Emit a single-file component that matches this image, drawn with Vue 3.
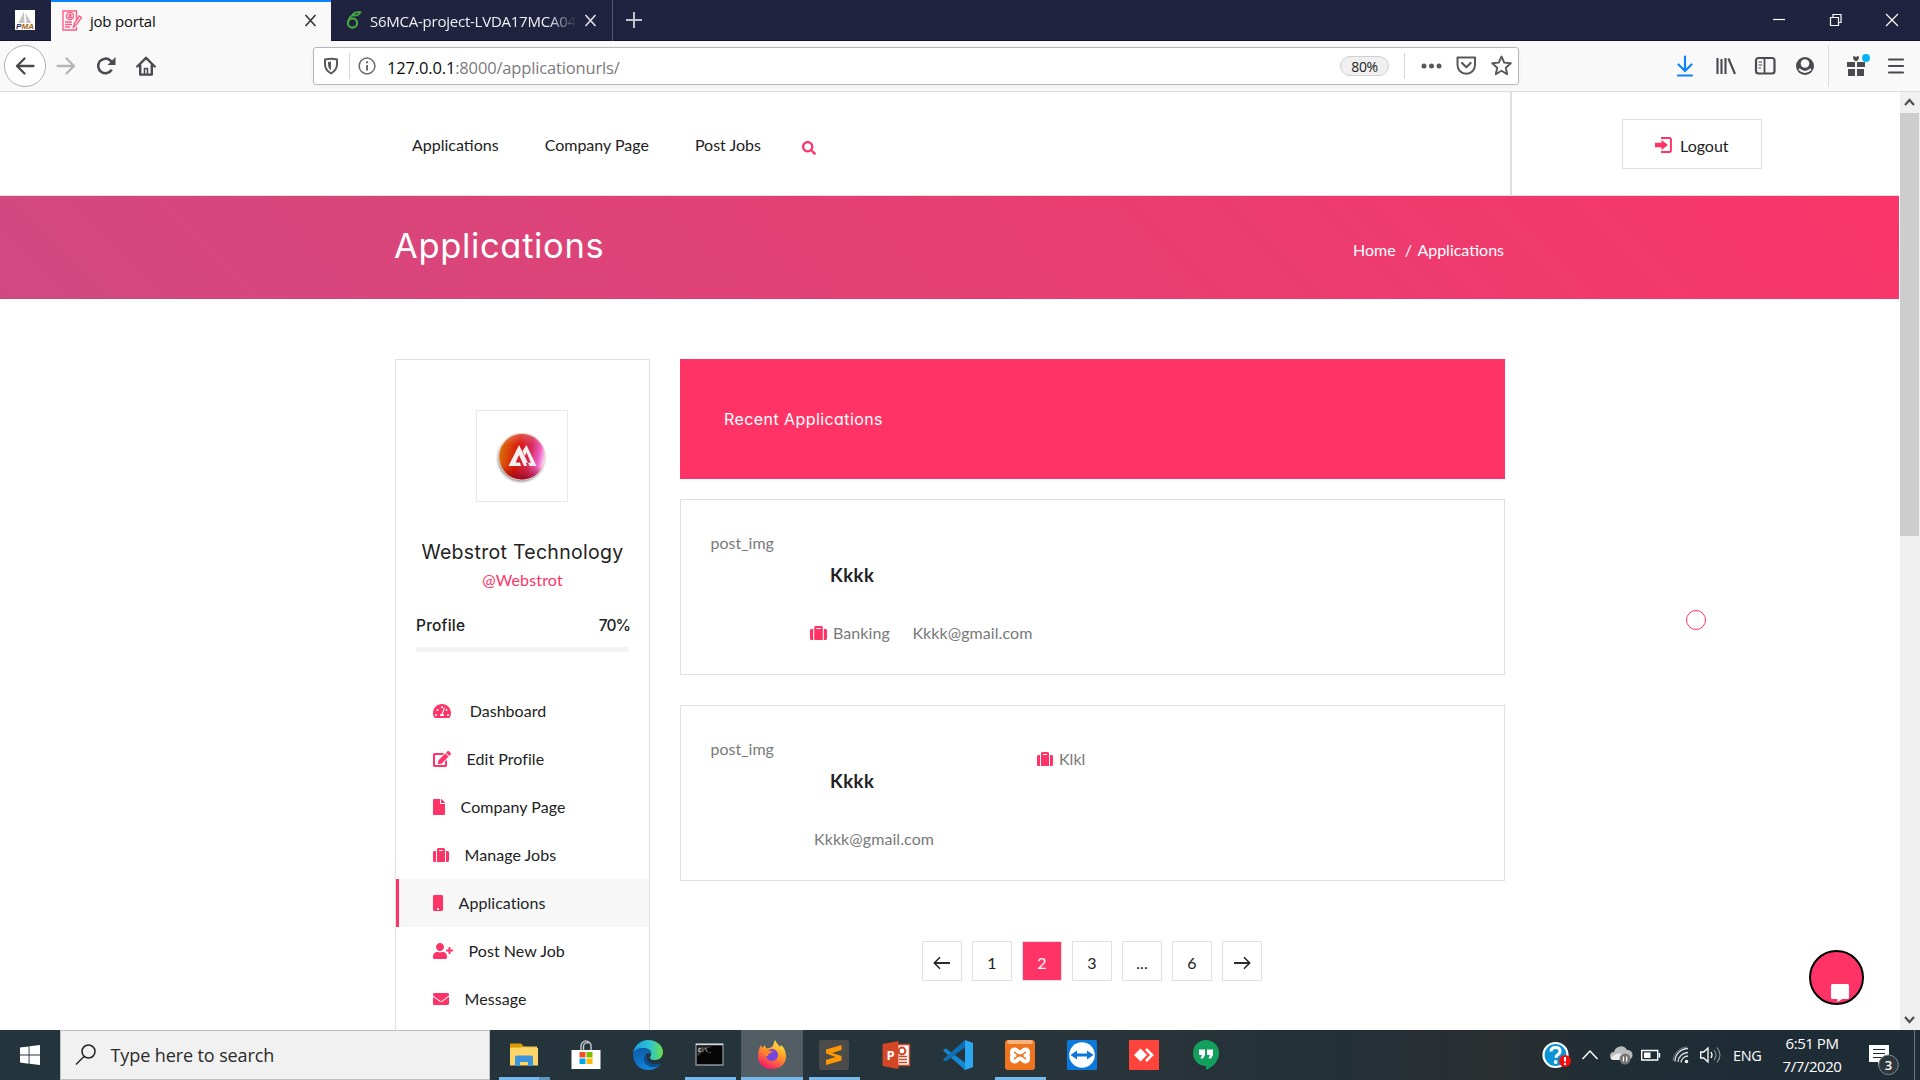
<script setup>
const icons = {
  suitcase: { w: 512, d: 'M128 480h256V80c0-26.5-21.5-48-48-48H176c-26.5 0-48 21.5-48 48v400zm64-384h128v32H192V96zm320 80v256c0 26.5-21.5 48-48 48h-48V128h48c26.5 0 48 21.5 48 48zM96 480H48c-26.5 0-48-21.5-48-48V176c0-26.5 21.5-48 48-48h48v352z' },
  gauge: { w: 576, d: 'M288 32C128.94 32 0 160.94 0 320c0 52.8 14.25 102.26 39.06 144.8 5.61 9.62 16.3 15.2 27.44 15.2h443c11.14 0 21.83-5.58 27.44-15.2C561.75 422.26 576 372.8 576 320c0-159.06-128.94-288-288-288zM96 352a32 32 0 1 1 0 64 32 32 0 0 1 0-64zM144 192a32 32 0 1 1 0 64 32 32 0 0 1 0-64zM288 96a32 32 0 0 1 26 50l-9 24a32 32 0 1 1-17-74zM480 352a32 32 0 1 1 0 64 32 32 0 0 1 0-64zM432 192a32 32 0 1 1 0 64 32 32 0 0 1 0-64zM359 137c13 4 20 17 16 30l-57 173c20 10 34 32 34 56 0 8-3 14-5 20H229c-3-6-5-13-5-20 0-34 27-62 61-64l57-173c4-13 10-24 17-22z' },
  edit: { w: 576, d: 'M402.6 83.2l90.2 90.2c3.8 3.8 3.8 10 0 13.8L274.4 405.6l-92.8 10.3c-12.4 1.4-22.9-9.1-21.5-21.5l10.3-92.8L388.8 83.2c3.8-3.8 10-3.8 13.8 0zm162-22.9l-48.8-48.8c-15.2-15.2-39.9-15.2-55.2 0l-35.4 35.4c-3.8 3.8-3.8 10 0 13.8l90.2 90.2c3.8 3.8 10 3.8 13.8 0l35.4-35.4c15.2-15.3 15.2-40 0-55.2zM384 346.2V448H64V128h229.8c3.2 0 6.2-1.3 8.5-3.5l40-40c7.6-7.6 2.2-20.5-8.5-20.5H48C21.5 64 0 85.5 0 112v352c0 26.5 21.5 48 48 48h352c26.5 0 48-21.5 48-48V306.2c0-10.7-12.9-16-20.5-8.5l-40 40c-2.2 2.3-3.5 5.3-3.5 8.5z' },
  file: { w: 384, d: 'M224 136V0H24C10.7 0 0 10.7 0 24v464c0 13.3 10.7 24 24 24h336c13.3 0 24-10.7 24-24V160H248c-13.2 0-24-10.8-24-24zm160-14.1v6.1H256V0h6.1c6.4 0 12.5 2.5 17 7l97.9 98c4.5 4.5 7 10.6 7 16.9z' },
  mobile: { w: 320, d: 'M272 0H48C21.5 0 0 21.5 0 48v416c0 26.5 21.5 48 48 48h224c26.5 0 48-21.5 48-48V48c0-26.5-21.5-48-48-48zM160 480c-17.7 0-32-14.3-32-32s14.3-32 32-32 32 14.3 32 32-14.3 32-32 32z' },
  userPlus: { w: 640, d: 'M624 208h-64v-64c0-8.8-7.2-16-16-16h-32c-8.8 0-16 7.2-16 16v64h-64c-8.8 0-16 7.2-16 16v32c0 8.8 7.2 16 16 16h64v64c0 8.8 7.2 16 16 16h32c8.8 0 16-7.2 16-16v-64h64c8.8 0 16-7.2 16-16v-32c0-8.8-7.2-16-16-16zm-400 48c70.7 0 128-57.3 128-128S294.7 0 224 0 96 57.3 96 128s57.3 128 128 128zm89.6 32h-16.7c-22.2 10.2-46.9 16-72.9 16s-50.6-5.8-72.9-16h-16.7C60.2 288 0 348.2 0 422.4V464c0 26.5 21.5 48 48 48h352c26.5 0 48-21.5 48-48v-41.6c0-74.2-60.2-134.4-134.4-134.4z' },
  envelope: { w: 512, d: 'M502.3 190.8c3.9-3.1 9.7-.2 9.7 4.7V400c0 26.5-21.5 48-48 48H48c-26.5 0-48-21.5-48-48V195.6c0-5 5.7-7.8 9.7-4.7 22.4 17.4 52.1 39.5 154.1 113.6 21.1 15.4 56.7 47.8 92.2 47.6 35.7.3 72-32.8 92.3-47.6 102-74.1 131.6-96.3 154-113.7zM256 320c23.2.4 56.6-29.2 73.4-41.4 132.7-96.3 142.8-104.7 173.4-128.7 5.8-4.5 9.2-11.5 9.2-18.9v-19c0-26.5-21.5-48-48-48H48c-26.5 0-48 21.5-48 48v19c0 7.4 3.4 14.3 9.2 18.9 30.6 23.9 40.7 32.4 173.4 128.7 16.8 12.2 50.2 41.8 73.4 41.4z' },
  search: { w: 512, d: 'M505 442.7L405.3 343c-4.5-4.5-10.6-7-17-7H372c27.6-35.3 44-79.7 44-128C416 93.1 322.9 0 208 0S0 93.1 0 208s93.1 208 208 208c48.3 0 92.7-16.4 128-44v16.3c0 6.4 2.5 12.5 7 17l99.7 99.7c9.4 9.4 24.6 9.4 33.9 0l28.3-28.3c9.4-9.4 9.4-24.6.1-34zM208 336c-70.7 0-128-57.2-128-128 0-70.7 57.2-128 128-128 70.7 0 128 57.2 128 128 0 70.7-57.2 128-128 128z' },
}

const menu = [
  { icon: 'gauge', label: 'Dashboard', wide: true },
  { icon: 'edit', label: 'Edit Profile' },
  { icon: 'file', label: 'Company Page' },
  { icon: 'suitcase', label: 'Manage Jobs' },
  { icon: 'mobile', label: 'Applications', active: true },
  { icon: 'userPlus', label: 'Post New Job' },
  { icon: 'envelope', label: 'Message' },
]

const pages = ['prev', '1', '2', '3', '...', '6', 'next']
</script>

<template>
  <div class="screen">
    <!-- Tab strip -->
    <div class="tabs">
      <div class="pinned">
        <svg width="20" height="20" viewBox="0 0 20 20">
          <rect width="20" height="20" fill="#fff" />
          <path d="M9 1.500 3.500 13h6zM10.500 3l1 10h5z" fill="#c4c4c4" />
          <text x="1" y="19" font-family="Liberation Sans, sans-serif" font-weight="700" font-style="italic" font-size="8" textLength="18" fill="#2b2b66">P<tspan fill="#a8630c">MA</tspan></text>
        </svg>
      </div>
      <div class="tab active">
        <svg class="fav" width="20" height="21" viewBox="0 0 20 21" fill="none" stroke="#ff5c85" stroke-width="1.400">
          <path d="M14.500 10V1H1v19h13.500v-3" />
          <circle cx="8" cy="6" r="3.600" />
          <circle cx="8" cy="5.200" r="1" />
          <path d="M6 8.200q2-2 4 0M3 12h7M3 14.500h7M3 17h5M11.500 17l1-4 5-7 2 1.500-5 7z" />
        </svg>
        <span class="tab-title">job portal</span>
        <svg class="x" width="13" height="13" viewBox="0 0 13 13"><path d="M1.500 1l10 11M11.500 1l-10 11" stroke="#38383d" stroke-width="1.700" /></svg>
      </div>
      <div class="tab second">
        <svg class="leaf" width="16" height="18" viewBox="0 0 16 18" fill="none" stroke="#46a83f" stroke-width="2.200"><circle cx="6.500" cy="12" r="4.600" /><path d="M2.500 10C3 6 6 4 9 3.600M6 5C7 1.500 10 .8 14.500 1.200 13 4 10 5 7 4.600" stroke-width="1.700" /></svg>
        <span class="tab-title fade">S6MCA-project-LVDA17MCA04</span>
        <svg class="x" width="13" height="13" viewBox="0 0 13 13"><path d="M1.500 1l10 11M11.500 1l-10 11" stroke="#dcdce2" stroke-width="1.700" /></svg>
      </div>
      <svg class="plus" width="18" height="18" viewBox="0 0 18 18"><path d="M9 1v16M1 9h16" stroke="#c3c3cc" stroke-width="2" /></svg>
      <svg class="winctl" width="130" height="20" viewBox="0 0 130 20" fill="none" stroke="#fff" stroke-width="1.200">
        <path d="M3 9.500h12" />
        <path d="M60.500 7.500h8v8h-8zM63 7.500v-3h8v8h-2.500" />
        <path d="M116 4l12 12M128 4l-12 12" />
      </svg>
    </div>

    <!-- Navigation toolbar -->
    <div class="toolbar">
      <div class="back">
        <svg width="20" height="18" viewBox="0 0 20 18" fill="none" stroke="#4a4a4f" stroke-width="2.300" stroke-linecap="round" stroke-linejoin="round"><path d="M9.500 1.500L2 9l7.500 7.500M2 9h16.500" /></svg>
      </div>
      <svg class="fwd" width="20" height="18" viewBox="0 0 20 18" fill="none" stroke="#b6b6b8" stroke-width="2.300" stroke-linecap="round" stroke-linejoin="round"><path d="M10.500 1.500L18 9l-7.500 7.500M18 9H1.500" /></svg>
      <svg class="reload" width="20" height="20" viewBox="0 0 20 20"><path d="M15.800 13.600A7.300 7.300 0 1 1 14.500 4.600L17 7" fill="none" stroke="#4a4a4f" stroke-width="2.500" /><path d="M19.500 1v8h-8z" fill="#4a4a4f" /></svg>
      <svg class="home" width="20" height="20" viewBox="0 0 20 20" fill="none" stroke="#4a4a4f" stroke-width="2.400" stroke-linejoin="round" stroke-linecap="round"><path d="M1.300 10.500L10 1.800l8.700 8.700M4.200 9v9.600h11.600V9" /><path d="M8.500 18v-5.500h3V18" stroke-width="1.600" /></svg>
      <div class="url">
        <svg class="shield" width="16" height="18" viewBox="0 0 16 18"><path d="M2 2.500Q8 .8 14 2.500V7q0 6-6 9.500Q2 13 2 7z" fill="none" stroke="#58585c" stroke-width="2" stroke-linejoin="round" /><path d="M8 4.500v9Q5 11 5 7V5z" fill="#58585c" /></svg>
        <i class="vline"></i>
        <svg class="info" width="18" height="18" viewBox="0 0 18 18"><circle cx="9" cy="9" r="7.900" fill="none" stroke="#6d6d70" stroke-width="1.500" /><path d="M9 8v5.500M9 4.300v2" stroke="#6d6d70" stroke-width="2" /></svg>
        <span class="address">127.0.0.1<em>:8000/applicationurls/</em></span>
        <span class="zoom">80%</span>
        <i class="vline z"></i>
        <svg class="acts" width="94" height="24" viewBox="0 0 94 24">
          <g fill="#58585c"><circle cx="5" cy="12" r="2.500" /><circle cx="12.500" cy="12" r="2.500" /><circle cx="20" cy="12" r="2.500" /></g>
          <path d="M38.500 3.500h17.500v7.500a8.750 8.750 0 0 1-17.500 0z" fill="none" stroke="#58585c" stroke-width="2" stroke-linejoin="round" />
          <path d="M43 9l4.300 4.200L51.600 9" fill="none" stroke="#58585c" stroke-width="2.200" stroke-linecap="round" stroke-linejoin="round" />
          <path d="M82.500 2.500l2.700 6.100 6.600.7-5 4.400 1.400 6.500-5.700-3.400-5.700 3.400 1.400-6.500-5-4.400 6.600-.7z" fill="none" stroke="#58585c" stroke-width="1.900" stroke-linejoin="round" />
        </svg>
      </div>
      <svg class="tools" width="137" height="26" viewBox="0 0 137 26" fill="none" stroke="#4a4a4f">
        <path d="M8 3.500v14M1.500 11.500L8 18l6.500-6.500M1 22.500h14" stroke="#0a84ff" stroke-width="2.200" stroke-linecap="round" />
        <path d="M40.500 5v16M44.500 6v15M48.500 5v16M51.500 5.500l6.500 15.500" stroke-width="2.100" />
        <rect x="79" y="5" width="18.500" height="15.500" rx="2.500" stroke-width="2.200" /><path d="M87.500 5v15" stroke-width="1.800" /><path d="M81.500 9h3.500M81.500 12h3.500M81.500 15h2.500" stroke-width="1.200" />
        <circle cx="128" cy="13" r="9" fill="#4a4a4f" stroke="none" /><circle cx="128" cy="10.500" r="4.300" fill="#f9f9fa" stroke="none" /><path d="M122 16q6 6 12 0" stroke="#f9f9fa" stroke-width="1.800" />
      </svg>
      <i class="tsep"></i>
      <svg class="gift" width="60" height="30" viewBox="0 0 60 30">
        <path d="M1 11h8v5H1zM11 11h8v5h-8zM2 18h7v7H2zM11 18h7v7h-7z" fill="#4a4a4f" />
        <path d="M10 10.500Q6.500 8.500 7 5.500q2-1 3 .8 1-1.800 3-.8.500 3-3 5z" fill="#4a4a4f" />
        <circle cx="20" cy="7" r="3.900" fill="#00b3f4" />
        <path d="M43 8.500h14M43 15h14M43 21.500h14" stroke="#4a4a4f" stroke-width="2.200" stroke-linecap="round" />
      </svg>
    </div>

    <!-- Web page -->
    <div class="viewport">
      <div class="page">
        <header class="site-head">
          <nav>
            <a>Applications</a><a>Company Page</a><a>Post Jobs</a>
            <svg width="14" height="14" viewBox="0 0 512 512"><path :d="icons.search.d" fill="#ff3366" /></svg>
          </nav>
          <div class="head-right">
            <button class="logout">
              <svg width="17" height="16" viewBox="0 0 17 16"><path d="M6 1.100h8.500a1.400 1.400 0 0 1 1.400 1.400v11a1.400 1.400 0 0 1-1.400 1.400H6" fill="none" stroke="#ff3366" stroke-width="2" /><path d="M0 5.800h6.500V3l6.500 5-6.500 5v-2.800H0z" fill="#ff3366" /></svg>
              <span>Logout</span>
            </button>
          </div>
        </header>

        <section class="hero">
          <h1>Applications</h1>
          <div class="crumbs"><span>Home</span><span class="slash">/</span><span>Applications</span></div>
        </section>

        <main class="content">
          <aside class="side">
            <div class="avatar">
              <svg width="52" height="54" viewBox="0 0 52 54">
                <defs>
                  <linearGradient id="ball" x1="0" y1=".3" x2="1" y2=".5"><stop offset="0" stop-color="#d97708" /><stop offset=".4" stop-color="#d9180c" /><stop offset=".68" stop-color="#d62a58" /><stop offset=".88" stop-color="#ee62c4" /><stop offset="1" stop-color="#fbd3ef" /></linearGradient>
                  <linearGradient id="shade" x1="0" y1="0" x2="0" y2="1"><stop offset="0" stop-color="#fff" stop-opacity=".25" /><stop offset=".25" stop-color="#fff" stop-opacity="0" /><stop offset=".7" stop-color="#900" stop-opacity="0" /><stop offset="1" stop-color="#800018" stop-opacity=".75" /></linearGradient>
                  <filter id="soft"><feGaussianBlur stdDeviation="1.300" /></filter>
                </defs>
                <circle cx="25" cy="28.500" r="23.500" fill="#777" opacity=".7" filter="url(#soft)" />
                <circle cx="26" cy="26.500" r="23.700" fill="#f0d0c8" />
                <circle cx="26" cy="26.800" r="22.800" fill="url(#ball)" />
                <circle cx="26" cy="26.800" r="22.800" fill="url(#shade)" />
                <path d="M12.500 36L23 15l10.500 21H28l-5-11-3.300 7.500H24l1 3.500zM26.500 21L30.500 15 40.500 36h-9.300l-1.500-3.300H35L30.500 22.500l-1.500 3.500z" fill="#f4f0f0" fill-rule="evenodd" />
              </svg>
            </div>
            <h3>Webstrot Technology</h3>
            <p class="handle">@Webstrot</p>
            <div class="progress-head"><span>Profile</span><span class="pct">70%</span></div>
            <div class="progress"></div>
            <ul>
              <li v-for="m in menu" :key="m.label" :class="{ active: m.active, wide: m.wide }">
                <svg height="16" :width="icons[m.icon].w / 32" :viewBox="`0 0 ${icons[m.icon].w} 512`"><path :d="icons[m.icon].d" fill="#ff3366" fill-rule="evenodd" /></svg>
                <span>{{ m.label }}</span>
              </li>
            </ul>
          </aside>

          <div class="list">
            <div class="list-title">Recent Applications</div>
            <article class="card">
              <div class="thumb">post_img</div>
              <div class="person">
                <h4>Kkkk</h4>
                <div class="meta first">
                  <svg width="17" height="16" viewBox="0 0 512 512" preserveAspectRatio="none"><path :d="icons.suitcase.d" fill="#ff3366" /></svg>
                  <span>Banking</span><span class="mail">Kkkk@gmail.com</span>
                </div>
              </div>
            </article>
            <article class="card">
              <div class="thumb">post_img</div>
              <div class="person">
                <h4>Kkkk</h4>
                <div class="meta"><span>Kkkk@gmail.com</span></div>
              </div>
              <div class="skill">
                <svg width="16" height="16" viewBox="0 0 512 512"><path :d="icons.suitcase.d" fill="#ff3366" /></svg>
                <span>Klkl</span>
              </div>
            </article>
            <div class="pager">
              <span v-for="p in pages" :key="p" :class="{ on: p === '2' }">
                <svg v-if="p === 'prev'" width="18" height="14" viewBox="0 0 18 14" fill="none" stroke="#222"><path d="M1.500 7H17" stroke-width="1.900" /><path d="M7 1.300L1.300 7 7 12.700" stroke-width="1.500" /></svg>
                <svg v-else-if="p === 'next'" width="18" height="14" viewBox="0 0 18 14" fill="none" stroke="#222"><path d="M1 7h15.500" stroke-width="1.900" /><path d="M11 1.300L16.700 7 11 12.700" stroke-width="1.500" /></svg>
                <template v-else>{{ p }}</template>
              </span>
            </div>
          </div>
        </main>

        <div class="cursor"></div>
        <div class="chat">
          <svg width="18" height="18" viewBox="0 0 18 18"><path d="M1.500 0h15A1.500 1.500 0 0 1 18 1.500v12a1.500 1.500 0 0 1-1.500 1.500H11l-4.500 3v-3h-5A1.500 1.500 0 0 1 0 13.500v-12A1.500 1.500 0 0 1 1.500 0z" fill="#fff" /></svg>
        </div>
      </div>
      <div class="scroll">
        <svg width="20" height="21" viewBox="0 0 20 21"><path d="M5 13l4.500-5 4.500 5" fill="none" stroke="#505050" stroke-width="2.200" /></svg>
        <div class="thumbbar"></div>
        <svg class="down" width="20" height="21" viewBox="0 0 20 21"><path d="M5 8l4.500 5L14 8" fill="none" stroke="#505050" stroke-width="2.200" /></svg>
      </div>
    </div>

    <!-- Taskbar -->
    <footer class="taskbar">
      <div class="start"><svg width="20" height="20" viewBox="0 0 20 20" fill="#fff"><path d="M0 2.600l8.600-1.200v8.100H0zM9.500 1.300L20 0v9.500H9.500zM0 10.400h8.600v8.300L0 17.500zM9.500 10.400H20V20L9.500 18.800z" /></svg></div>
      <div class="search">
        <svg width="22" height="22" viewBox="0 0 22 22" fill="none" stroke="#222" stroke-width="1.500"><circle cx="13.500" cy="7.500" r="6.500" /><path d="M9 12.500L1 20.500" /></svg>
        <span>Type here to search</span>
      </div>
      <div class="apps">
        <div class="app ul two"><svg viewBox="0 0 30 30"><path d="M1 4h11l2 2.500h14V25H1z" fill="#f8c84a" /><path d="M1 3.500h11l2 2.500-2 1.500H1z" fill="#dd9a07" /><path d="M1 8h28v17.500H1z" fill="#fdd568" /><path d="M6 26V17.500a2 2 0 0 1 2-2h14a2 2 0 0 1 2 2V26h-5v-4h-8v4z" fill="#3a96dd" /></svg></div>
        <div class="app"><svg viewBox="0 0 30 30"><path d="M10 11V6a5 5 0 0 1 10 0v4M12.500 10V6a3.500 3.500 0 0 1 5-3" fill="none" stroke="#b9c0c4" stroke-width="1.500" /><path d="M.5 10h29v19H.5z" fill="#fff" /><path d="M8.500 12h6v5.500h-6z" fill="#f25022" /><path d="M15.500 12h6v5.500h-6z" fill="#7fba00" /><path d="M8.500 18.500h6V24h-6z" fill="#00a4ef" /><path d="M15.500 18.500h6V24h-6z" fill="#ffb900" /></svg></div>
        <div class="app"><svg viewBox="0 0 30 30"><defs><linearGradient id="e1"><stop offset="0" stop-color="#1b9de2" /><stop offset=".55" stop-color="#2bc3d2" /><stop offset="1" stop-color="#6be04a" /></linearGradient><linearGradient id="e2" x2=".4" y2="1"><stop offset="0" stop-color="#0c59a4" /><stop offset="1" stop-color="#1584d8" /></linearGradient></defs><path d="M0 14C1 5 8 0 15 0c9 0 15 6 15 12 0 5-3.500 8-8 8-4 0-6-1.500-4.500-3.500C20 12 16 8 11 8 6 8 1.500 10 0 14z" fill="url(#e1)" /><path d="M0 14c1-4 5-6 10-6s8 3 8 6c-3-2-7 0-7 5 0 4 4 8 10 8 3 0 5-1 6.500-2.500C25 28 20 30 15 30 6 30 0 23 0 14z" fill="url(#e2)" /><path d="M11 17c-1 5 3 10 10 10 3 0 5.500-1.500 7-4-8 3.500-16-1-14-8-1.500 0-2.500.5-3 2z" fill="#0b4e96" /></svg></div>
        <div class="app ul"><svg viewBox="0 0 30 30"><path d="M1 4h27v21H1z" fill="#050505" stroke="#8f9599" stroke-width="1.300" /><path d="M1 4.500h27" stroke="#d6d9da" stroke-width="1.500" /><path d="M2.500 14V6.500h15Q9 9 2.500 17z" fill="#3a3a3a" /><text x="3" y="11.500" font-family="Liberation Mono, monospace" font-size="5.500" font-weight="700" fill="#ddd">C:\_</text></svg></div>
        <div class="app ul focus"><svg viewBox="0 0 30 30"><defs><linearGradient id="f1" x1=".8" x2=".3" y2="1"><stop offset="0" stop-color="#fff04a" /><stop offset=".45" stop-color="#ff9a26" /><stop offset="1" stop-color="#f5156c" /></linearGradient></defs><path d="M18 0c1 3 4 5 5 7l1-2c4 3 5 8 5 12 0 7-6 12-14 12S1 24 1 17c0-5 1-9 3-12l1 3 3-3c0 2 1 3 2 3.500 3-.5 5-1 6-3 1-2 1-4 2-5.500z" fill="url(#f1)" /><circle cx="15" cy="15" r="6" fill="#7645dc" /><path d="M8 12c3-3 6-1 8 0-2 1-5 1-5 4-3 0-4-2-3-4z" fill="#ff8b20" /></svg></div>
        <div class="app ul"><svg viewBox="0 0 30 30"><rect width="30" height="30" rx="2" fill="#4b4b4b" /><path d="M7 9.500L22.500 5v5L13 13l9.500 3v4.500L7 25v-5l9.500-3L7 13.500z" fill="#ff9800" /></svg></div>
        <div class="app"><svg viewBox="0 0 30 30"><path d="M15 4.500h13.500v21H15z" fill="#fff" stroke="#d04525" stroke-width="1.400" /><path d="M18 16.500h8M18 19.500h8M18 22.500h8" stroke="#d04525" stroke-width="1.400" /><circle cx="21" cy="11" r="3.400" fill="none" stroke="#d04525" stroke-width="2" /><path d="M1.500 4L17.500 1v28l-16-3z" fill="#d24726" /><text x="5.500" y="19.500" font-family="Open Sans, sans-serif" font-size="13" font-weight="700" fill="#fff">P</text></svg></div>
        <div class="app"><svg viewBox="0 0 30 30"><path d="M0 10.500l2.500-2.300L24 24l-2 6z" fill="#1389d1" /><path d="M0 19.500l2.500 2.300L24 6l-2-6z" fill="#0f6fb3" /><path d="M22 0l8 3v24l-8 3z" fill="#2aa9f2" /></svg></div>
        <div class="app ul"><svg viewBox="0 0 30 30"><rect width="30" height="30" rx="3" fill="#ef7420" /><rect x="2" width="26" height="4" rx="2" fill="#fbb27d" /><path d="M9.500 9.500c3 0 3 3 5.500 3s2.500-3 5.500-3 4 5.500 0 6c4 .5 3 6 0 6s-3-3-5.500-3-2.500 3-5.500 3-4-5.500 0-6c-4-.5-3-6 0-6z" fill="none" stroke="#fff" stroke-width="4" stroke-linejoin="round" /></svg></div>
        <div class="app"><svg viewBox="0 0 30 30"><rect width="30" height="30" rx="1.500" fill="#0b78dc" /><circle cx="15" cy="15" r="12.800" fill="#fff" /><path d="M3.500 15L10 10.500v3h10v-3L26.500 15 20 19.500v-3H10v3z" fill="#0b78dc" /></svg></div>
        <div class="app"><svg viewBox="0 0 30 30"><rect width="30" height="30" fill="#fe443b" /><path d="M5 15l6.500-6.500L18 15l-6.500 6.500z" fill="#fff" /><path d="M15.500 9l6 6-6 6" fill="none" stroke="#fe443b" stroke-width="2" /><path d="M17 9l6 6-6 6" fill="none" stroke="#fff" stroke-width="2.600" /></svg></div>
        <div class="app"><svg viewBox="0 0 30 30"><path d="M15 0a13 13 0 0 1 13 13c0 8-6 14-13 17v-4A13 13 0 0 1 15 0z" fill="#13a05c" /><path d="M8 9.500h6v5.500l-2 3.500H9.500L11 15H8zM16 9.500h6v5.500l-2 3.500h-2.500L19 15h-3z" fill="#fff" /></svg></div>
      </div>
      <div class="tray">
        <svg class="trayicons" width="182" height="30" viewBox="0 0 182 30" fill="none" stroke="#fff">
          <circle cx="13.500" cy="15" r="12" fill="#0a94d6" stroke-width="2.200" />
          <path d="M9 11.500q0-4 4.500-4t4.500 3.700q0 2.300-2.400 3.600-1.600.9-1.600 3" stroke-width="3" /><circle cx="13.700" cy="22" r="1.900" fill="#fff" stroke="none" />
          <circle cx="23" cy="21" r="6" fill="#f00d0d" stroke="none" /><path d="M23 17v4.500M23 23v2" stroke-width="2" />
          <path d="M40.500 19l7.500-8 7.500 8" stroke-width="1.500" />
          <path d="M72 20a4 4 0 0 1 0-8 7 7 0 0 1 13-2 5 5 0 0 1 1 10z" fill="#b9bcbd" stroke="none" /><path d="M69 18q6-8 16-2v4H72q-3 0-3-2z" fill="#ececec" stroke="none" />
          <circle cx="83" cy="19" r="5.500" fill="#747474" stroke="none" /><path d="M81.500 16.500v5M84.700 16.500v5" stroke-width="1.200" />
          <path d="M99.700 10.500h16v9.500h-16zM117.500 13v4.500" stroke-width="1.400" /><path d="M102 12.500h6.500v5.500H102z" fill="#fff" stroke="none" />
          <path d="M133 21.500A13 13 0 0 1 146 8.500M136 22A10 10 0 0 1 146 12.500M139 22.500a7 7 0 0 1 7-6.500" stroke-width="1.300" stroke="#d9dddf" /><path d="M131 20.500A14.500 14.500 0 0 1 145 7" stroke-width=".8" stroke="#8d979b" /><circle cx="144.500" cy="21.500" r="1.700" fill="#fff" stroke="none" />
          <path d="M158.700 12h3l4.300-4v14l-4.300-4h-3z" stroke-width="1.300" /><path d="M169 12q2 3 0 6" stroke-width="1.300" /><path d="M172 10q4 5 0 10M175 7.500q6 7.500 0 15" stroke-width="1.100" stroke="#8d979b" />
        </svg>
        <span class="lang">ENG</span>
        <div class="clock"><span>6:51 PM</span><span>7/7/2020</span></div>
        <div class="notif">
          <svg width="30" height="31" viewBox="0 0 30 31"><path d="M0 0h20v17h-7l-4 4v-4H0z" fill="#fff" /><path d="M4 4.500h12M4 8.500h12M4 12.500h9" stroke="#1e2c34" stroke-width="1.200" /><circle cx="19.500" cy="19.800" r="9.800" fill="#2e383d" stroke="#7f888c" /><text x="19.500" y="24.500" text-anchor="middle" font-family="Open Sans, sans-serif" font-size="13" font-weight="600" fill="#fff">3</text></svg>
        </div>
        <i class="peek"></i>
      </div>
    </footer>
  </div>
</template>

<style>
html, body { margin: 0; overflow: hidden; background: #fff; }
</style>

<style scoped>
* { box-sizing: border-box; }
.screen { width: 1920px; height: 1080px; display: flex; flex-direction: column; overflow: hidden; font-family: "Lato", sans-serif; font-size: 16px; color: #222; }
svg { display: block; flex: none; }
h1, h3, h4, p, ul { margin: 0; padding: 0; font-weight: 400; }

.tabs { height: 41px; flex: none; background: #202340; display: flex; align-items: center; border-bottom: 1px solid #12132c; font-family: "Open Sans", sans-serif; font-size: 15px; }
.pinned { width: 51px; padding-left: 15px; }
.tab { display: flex; align-items: center; height: 41px; }
.tab.active { width: 280px; background: #f9f9fa; border-top: 3px solid #0a84ff; padding: 0 14px 3px 11px; color: #0c0c0d; position: relative; height: 42px; }
.tab.active .tab-title { margin: 2px 0 0 8px; letter-spacing: -.22px; }
.x { margin-left: auto; }
.tab.second { width: 282px; padding: 0 15px; color: #f0f0f4; border-right: 1px solid #55576c; }
.fade { width: 207px; margin: 1px 0 0 8px; white-space: nowrap; overflow: hidden; letter-spacing: -.24px; -webkit-mask-image: linear-gradient(90deg, #000 86%, transparent 100%); mask-image: linear-gradient(90deg, #000 86%, transparent 100%); }
.plus { margin-left: 12px; }
.winctl { margin-left: auto; margin-right: 20px; }

.toolbar { height: 51px; flex: none; background: #f9f9fa; border-bottom: 1px solid #dddddf; display: flex; align-items: center; padding-left: 4px; }
.back { width: 42px; height: 42px; border-radius: 50%; border: 1px solid #b1b1b3; background: #fff; display: flex; align-items: center; justify-content: center; }
.fwd { margin-left: 10px; }
.reload { margin-left: 20px; }
.home { margin-left: 20px; }
.url { width: 1206px; height: 38px; margin-left: 157px; border: 1px solid #b8b8ba; border-radius: 3px; background: #fff; display: flex; align-items: center; padding-left: 9px; box-shadow: 0 1px 4px rgba(0, 0, 0, .05); font-family: "Open Sans", sans-serif; }
.vline { width: 1px; height: 26px; background: #d7d7db; margin: 0 8px 0 10px; }
.address { margin-left: 11px; font-size: 16.500px; letter-spacing: -.16px; color: #0c0c0d; padding-top: 3px; }
.address em { font-style: normal; color: #7b7b7d; }
.zoom { margin-left: auto; width: 49px; height: 20px; border-radius: 10px; border: 1px solid #cfcfd2; background: #f0f0f1; font-size: 14px; line-height: 19px; text-align: center; letter-spacing: -.4px; }
.vline.z { margin: 0 14px 0 15px; }
.acts { margin-right: 5px; }
.tools { margin-left: 158px; }
.tsep { width: 1px; height: 42px; background: #dcdcde; margin: 0 17px 0 14px; }

.viewport { height: 938px; flex: none; display: flex; overflow: hidden; }
.page { width: 1899px; height: 938px; position: relative; overflow: hidden; }
.site-head { height: 104px; border-bottom: 1px solid #e1e1e1; display: flex; }
nav { display: flex; align-items: center; padding: 2px 0 0 412px; border-right: 2px solid #dedede; width: 1512px; height: 103px; }
nav a { margin-right: 46px; }
nav a:nth-child(3) { margin-right: 41px; }
nav svg { margin-top: 6px; }
.head-right { padding: 27px 0 0 110px; }
.logout { width: 140px; height: 50px; border: 1px solid #e1e1e1; background: #fff; font: inherit; color: #222; display: flex; align-items: center; padding: 2px 0 0 32px; }
.logout span { margin-left: 8px; }
.hero { height: 103px; background: linear-gradient(45deg, #d04a82 0%, #da457a 24%, #f93569 100%); display: flex; justify-content: space-between; color: #fff; padding: 0 395px 0 394px; }
.hero h1 { font-family: "Inter", sans-serif; font-feature-settings: "cv11"; font-size: 34.500px; line-height: 50px; padding-top: 25px; letter-spacing: .65px; }
.crumbs { display: flex; line-height: 20px; padding-top: 44px; }
.slash { margin: 0 5.500px 0 9px; }

.content { display: flex; padding: 60px 0 0 395px; }
.side { width: 255px; height: 700px; border: 1px solid #e1e1e1; display: flex; flex-direction: column; align-items: stretch; }
.avatar { width: 92px; height: 92px; margin: 50px 0 0 80px; border: 1px solid #e8e8e8; display: flex; align-items: center; justify-content: center; padding-top: 1px; }
.side h3 { font-family: "Inter", sans-serif; font-feature-settings: "cv11"; font-size: 19.500px; line-height: 30px; margin-top: 35px; text-align: center; white-space: nowrap; letter-spacing: .3px; }
.handle { color: #ff3366; text-align: center; line-height: 20px; margin-top: 3px; letter-spacing: .15px; }
.progress-head { display: flex; justify-content: space-between; margin: 21px 20px 0; line-height: 30px; font-family: "Inter", sans-serif; font-weight: 500; font-size: 15.500px; letter-spacing: .2px; }
.pct { letter-spacing: -.9px; margin-right: -1px; }
.progress { height: 5px; background: #f3f3f3; margin: 6px 20px 35px; }
.side ul { list-style: none; }
.side li { height: 48px; display: flex; align-items: center; padding-left: 37px; letter-spacing: .04px; }
.side li span { margin: -2px 0 0 15.600px; }
.side li.wide span { margin-left: 18.700px; }
.side li.active { background: #f7f7f7; border-left: 3px solid #ff3366; padding-left: 34px; }

.list { width: 825px; margin-left: 30px; }
.list-title { height: 120px; background: #ff3366; color: #fff; font-family: "Inter", sans-serif; font-feature-settings: "cv11"; line-height: 120px; padding-left: 44px; letter-spacing: .42px; }
.card { height: 176px; border: 1px solid #e1e1e1; margin-top: 20px; display: flex; padding-left: 29px; color: #797979; }
.card + .card { margin-top: 30px; }
.thumb { width: 99px; padding: 33px 0 0 .5px; line-height: 20px; }
.person { width: 228px; padding-top: 60px; }
.person h4 { font-weight: 700; color: #222; font-size: 18.500px; line-height: 30px; padding-left: 21px; letter-spacing: .5px; }
.meta { display: flex; align-items: center; height: 20px; margin-top: 32px; padding-left: 5px; white-space: nowrap; letter-spacing: .08px; }
.meta.first { padding-left: 1px; }
.meta.first svg { margin: 2px 6px 0 0; }
.mail { margin-left: 22.500px; }
.skill { display: flex; height: 20px; align-items: center; margin-top: 43px; }
.skill span { margin: -1px 0 0 6px; }
.pager { display: flex; gap: 10px; margin: 60px 0 0 242px; }
.pager span { width: 40px; height: 40px; border: 1px solid #e1e1e1; display: flex; align-items: center; justify-content: center; padding-top: 2px; }
.pager svg { margin-top: 2px; }
.pager .on { background: #ff3366; color: #fff; }

.cursor { position: absolute; left: 1686px; top: 518px; width: 20px; height: 20px; border: 1px solid #ff3366; border-radius: 50%; }
.chat { position: absolute; left: 1809px; top: 858px; width: 55px; height: 55px; border: 2px solid #000; border-radius: 50%; background: #ff3366; padding: 32px 0 0 20px; }
.scroll { width: 20px; margin-left: 1px; background: #f0f0f0; display: flex; flex-direction: column; }
.thumbbar { width: 19px; height: 423px; background: #cdcdcd; }
.down { margin-top: auto; }

.taskbar { height: 50px; flex: none; background: linear-gradient(90deg, #24343c 0%, #25343b 45%, #29353a 58%, #232f37 70%, #2a2e30 78%, #1f2d35 84%, #1d2c35 100%); display: flex; font-family: "Open Sans", sans-serif; color: #fff; }
.start { width: 60px; display: flex; align-items: center; justify-content: center; }
.search { width: 430px; background: #f1f1f1; border: 1px solid #bfbfbf; display: flex; align-items: center; color: #2b2b2b; font-size: 18px; padding-left: 14px; }
.search span { margin: -1px 0 0 13.500px; letter-spacing: -.1px; }
.apps { display: flex; padding-left: 3px; }
.app { width: 62px; display: flex; align-items: center; justify-content: center; position: relative; }
.app svg { width: 30px; height: 30px; }
.ul::after { content: ""; position: absolute; left: 6px; bottom: 0; width: 51px; height: 3px; background: #76b9ed; }
.two::after { background: linear-gradient(90deg, #76b9ed 40px, #5f94bf 40px); }
.focus { background: #525e64; }
.focus::after { left: 0; width: 62px; }
.tray { margin-left: auto; display: flex; align-items: center; }
.lang { font-size: 14.500px; width: 30px; margin-left: 9px; letter-spacing: -.3px; }
.clock { width: 80px; margin-left: 9px; display: flex; flex-direction: column; text-align: center; font-size: 15px; line-height: 23px; letter-spacing: -.45px; padding-bottom: 1px; }
.notif { margin-left: 17px; height: 50px; display: flex; padding-top: 15px; }
.peek { width: 1px; height: 50px; background: #6c777c; margin: 0 5px 0 15px; }
</style>
